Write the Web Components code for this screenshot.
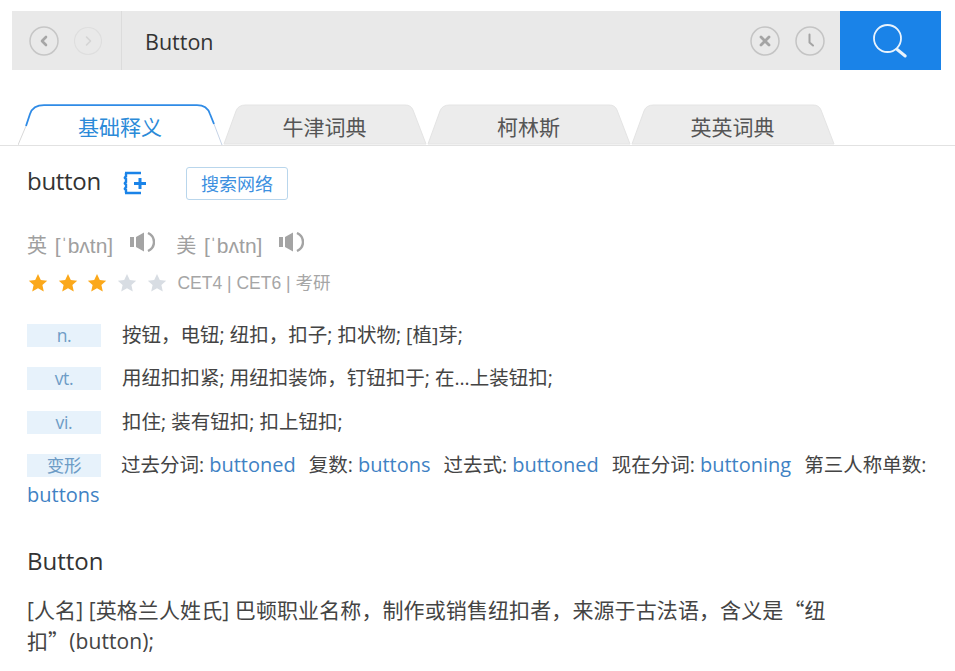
<!DOCTYPE html>
<html lang="zh"><head><meta charset="utf-8"><title>Button</title>
<style>
html,body{margin:0;padding:0;background:#fff}
body{width:955px;height:671px;overflow:hidden;font-family:"Open Sans","Noto Sans CJK SC",sans-serif;color:#333}
</style></head><body>
<dict-page></dict-page>
<script>
function def(name,html){
  customElements.define(name,class extends HTMLElement{
    constructor(){super();const r=this.attachShadow({mode:'open'});r.innerHTML=typeof html==='function'?html(this):html;}
  });
}
def('search-bar',`<style>
:host{display:flex;height:59px;margin:11px 14px 0 12px;background:#e9e9e9}
.nav{display:flex;align-items:center;gap:15px;width:110px;padding-left:17px;box-sizing:border-box;border-right:1px solid #dcdcdc}
.nav svg{display:block}
.q{flex:1;padding-left:23px;font:21.500px/61px "Open Sans",sans-serif;color:#333}
.tools{display:flex;align-items:center;gap:15px;padding-right:15px}
.tools svg{display:block}
.go{width:101px;background:#1a83e8;display:flex;align-items:center;justify-content:center}
.go svg{display:block}
</style>
<div class="nav">
<svg width="30" height="30" viewBox="0 0 30 30" fill="none"><circle cx="15" cy="15" r="14" stroke="#c6c6c6" stroke-width="1.500"/><path d="M17 11l-4 4 4 4" stroke="#a6a6a6" stroke-width="2.600" stroke-linecap="round" stroke-linejoin="round"/></svg>
<svg width="28" height="30" viewBox="0 0 28 30" fill="none"><circle cx="14" cy="15" r="13.500" stroke="#dedede" stroke-width="1.200"/><path d="M12.500 11l4 4-4 4" stroke="#d4d4d4" stroke-width="1.600" stroke-linecap="round" stroke-linejoin="round"/></svg>
</div>
<div class="q">Button</div>
<div class="tools">
<svg width="30" height="30" viewBox="0 0 30 30" fill="none"><circle cx="15" cy="15" r="14" stroke="#c4c4c4" stroke-width="1.500"/><path d="M11 11l8 8M19 11l-8 8" stroke="#a4a4a4" stroke-width="2.800" stroke-linecap="round"/></svg>
<svg width="30" height="30" viewBox="0 0 30 30" fill="none"><circle cx="15" cy="15" r="14" stroke="#c4c4c4" stroke-width="1.500"/><path d="M14.500 8.500v8l3.500 3" stroke="#a4a4a4" stroke-width="2" stroke-linecap="round" stroke-linejoin="round"/></svg>
</div>
<div class="go"><svg width="38" height="38" viewBox="0 0 38 38" fill="none"><circle cx="15.500" cy="16.500" r="13.500" stroke="#e8f3fd" stroke-width="1.800"/><path d="M25.200 27.500l8 6.500" stroke="#e8f3fd" stroke-width="3" stroke-linecap="round"/></svg></div>`);
def('dict-tab',h=>{
  const on=h.hasAttribute('active');
  return `<style>
:host{display:block;position:relative;width:${on?205:204}px;height:41px}
svg{position:absolute;left:0;top:0}
.t{position:relative;display:block;text-align:center;font:21px/44px "Noto Sans CJK SC",sans-serif;color:${on?'#2b8ad8':'#555'};padding-right:${on?1:1}px}
</style>
<svg width="${on?205:204}" height="41" viewBox="0 0 ${on?205:204} 41" fill="none">${on
 ?`<path d="M0 41L12 10Q15 1 26 1H179Q189 1 192 10L204 41Z" fill="#fff"/><path d="M0 41L8 22" stroke="#d8d8d8"/><path d="M196 20L204 41" stroke="#c6d3e6"/><path d="M8 22L12 10Q15 1.200 26 1.200H179Q189 1.200 192 10L196 20" stroke="#2f8be6" stroke-width="1.800"/>`
 :`<path d="M1 40L13 7Q15 1 23 1H182Q188 1 190 6L203 40Z" fill="#ececec" stroke="#e4e4e4"/>`}</svg>
<span class="t"><slot></slot></span>`;
});
def('tab-bar',`<style>
:host{display:flex;margin-top:34px;height:42px;padding-left:18px;position:relative;box-sizing:border-box}
:host::after{content:"";position:absolute;left:0;right:0;bottom:0;height:1px;background:#e2e2e2}
::slotted(*){z-index:1}
</style><slot></slot>`);
def('head-word',`<style>
:host{display:flex;align-items:center;height:44px;padding-left:27px}
.w{font:500 24px/34px "Open Sans",sans-serif;color:#333;width:95px;letter-spacing:-.3px}
svg{display:block;margin:3px 40px 0 0}
.b{box-sizing:border-box;width:102px;height:33px;margin-top:4px;border:1px solid #b9d6ec;border-radius:3px;text-align:center;font:18px/31px "Noto Sans CJK SC",sans-serif;color:#3c90e0}
</style><span class="w">button</span>
<svg width="24" height="24" viewBox="0 0 24 24" fill="none" stroke="#1a83e8"><path d="M3 2H19M3 22H19" stroke-width="2.600"/><path d="M4 2v3.500q-2.500 1 0 2.500v3q-2.500 1 0 2.500v3q-2.500 1 0 2.500V22" stroke-width="2.400"/><path d="M12 12.500h12M18 7v11" stroke-width="3"/></svg>
<span class="b">搜索网络</span>`);
const spk=`<svg width="25" height="20" viewBox="0 0 25 20" fill="none"><path d="M0 5h4v10H0zM6 5l8-4.500v19L6 15z" fill="#a4a4a4"/><path d="M18 1q6 3 6 9t-6 9" stroke="#a4a4a4" stroke-width="2.400"/></svg>`;
def('phon-line',`<style>
:host{display:flex;align-items:center;height:29px;padding-left:27px;font:21px/29px "Liberation Sans","Noto Sans CJK SC",sans-serif;color:#a0a0a0}
svg{display:block;margin:-6px 0 0 17px}
.z{font:20px/29px "Noto Sans CJK SC",sans-serif;margin-right:2px}
</style><span><span class="z">英</span> [ˈbʌtn]</span>${spk}<span style="margin-left:21px"><span class="z">美</span> [ˈbʌtn]</span>${spk}`);
const star=c=>`<svg width="20" height="20" viewBox="0 0 20 20"><path d="M10 1l2.800 6 6.400.7-4.800 4.300 1.400 6.500L10 15.200 4.200 18.500 5.600 12 .8 7.700 7.200 7z" fill="${c}"/></svg>`;
def('star-line',`<style>
:host{display:flex;align-items:center;height:26px;padding-left:28px;gap:9.700px;font:17.500px/26px "Liberation Sans","Noto Sans CJK SC",sans-serif;color:#a6a6a6}
svg{display:block}span{margin-left:1px}
</style>${star('#fba81a')}${star('#fba81a')}${star('#fba81a')}${star('#d8dde3')}${star('#d8dde3')}<span>CET4 | CET6 | 考研</span>`);
def('pos-row',`<style>
:host{display:block;font:19.500px/30px "Open Sans","Noto Sans CJK SC",sans-serif;color:#444;padding-left:27px}
</style><slot></slot>`);
def('pos-tag',`<style>
:host{display:inline-block;box-sizing:border-box;width:74px;height:23px;background:#e7f2fb;color:#6d9cc6;text-align:center;font:17.500px/23px "Open Sans","Noto Sans CJK SC",sans-serif;margin-right:21px;vertical-align:0;letter-spacing:-.3px}
</style><slot></slot>`);
def('word-link',`<style>:host{color:#3f82c4;font:20px/30px "Open Sans",sans-serif}:host(.g){margin-right:13px}</style><slot></slot>`);
def('v-gap',h=>`<style>:host{display:block;height:${h.getAttribute('h')}px}</style>`);
def('sec-title',`<style>:host{display:block;padding:33px 0 0 27px;font:24px/36px "Open Sans",sans-serif;color:#333}</style><slot></slot>`);
def('sec-text',`<style>:host{display:block;padding:15px 0 0 27px;width:805px;font:21px/30px "Open Sans","Noto Sans CJK SC",sans-serif;letter-spacing:.1px;color:#444}.q{font-family:"Noto Sans CJK SC",sans-serif}</style>[人名] [英格兰人姓氏] 巴顿职业名称，制作或销售纽扣者，来源于古法语，含义是<span class="q">“</span>纽扣<span class="q">”</span>(button);`);
def('dict-page',`<style>:host{display:block}</style>
<search-bar></search-bar>
<tab-bar><dict-tab active>基础释义</dict-tab><dict-tab>牛津词典</dict-tab><dict-tab>柯林斯</dict-tab><dict-tab>英英词典</dict-tab></tab-bar>
<v-gap h="13"></v-gap>
<head-word></head-word>
<v-gap h="27"></v-gap>
<phon-line></phon-line>
<v-gap h="11"></v-gap>
<star-line></star-line>
<v-gap h="24"></v-gap>
<pos-row><pos-tag>n.</pos-tag>按钮，电钮; 纽扣，扣子; 扣状物; [植]芽;</pos-row>
<v-gap h="13"></v-gap>
<pos-row><pos-tag>vt.</pos-tag>用纽扣扣紧; 用纽扣装饰，钉钮扣于; 在...上装钮扣;</pos-row>
<v-gap h="14"></v-gap>
<pos-row><pos-tag>vi.</pos-tag>扣住; 装有钮扣; 扣上钮扣;</pos-row>
<v-gap h="13"></v-gap>
<pos-row style="width:905px"><pos-tag style="margin-right:20px">变形</pos-tag>过去分词: <word-link class="g">buttoned</word-link>复数: <word-link class="g">buttons</word-link>过去式: <word-link class="g">buttoned</word-link>现在分词: <word-link class="g">buttoning</word-link>第三人称单数: <word-link>buttons</word-link></pos-row>
<sec-title>Button</sec-title>
<sec-text></sec-text>`);
</script>
</body></html>
